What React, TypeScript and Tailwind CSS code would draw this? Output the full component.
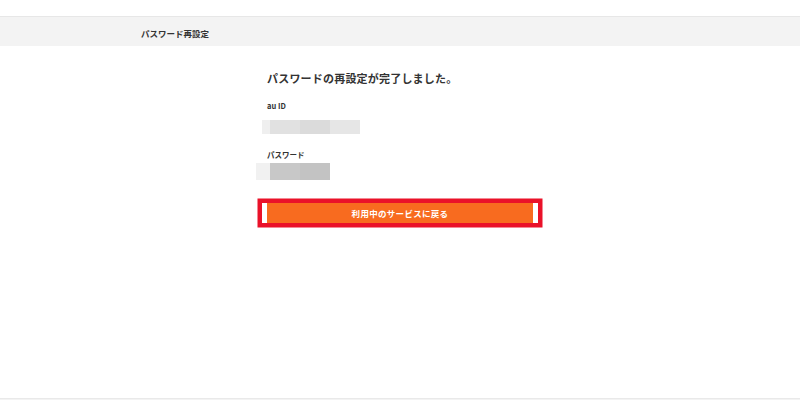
import React from 'react';

const font = { fontFamily: '"Noto Sans CJK JP", "Noto Sans", sans-serif' };

function Masked({ blocks, className }: { blocks: [string, string][]; className?: string }) {
  return (
    <div className={`flex ${className ?? ''}`}>
      {blocks.map(([w, bg], i) => (
        <div key={i} className={`${w} ${bg} h-full`} />
      ))}
    </div>
  );
}

export default function App() {
  return (
    <div className="h-[400px] flex flex-col bg-white text-[#333]" style={font}>
      <div className="h-4" />
      <header className="h-[30px] border-t border-[#e7e7e7] bg-[#f3f3f3] flex items-center pt-[2px]">
        <div className="w-[518px] mx-auto text-[8.5px] font-bold leading-[12px]">パスワード再設定</div>
      </header>

      <main className="w-[276px] mx-auto pt-[23.5px]">
        <h1 className="px-[5px] text-[11px] font-bold leading-[16px] tracking-[0.2px]">
          パスワードの再設定が完了しました。
        </h1>

        <p className="mt-[15px] px-[5px] text-[7.5px] font-bold leading-[10px]">au ID</p>
        <Masked
          className="mt-[9.5px] h-[14px]"
          blocks={[
            ['w-[8px]', 'bg-[#efefef]'],
            ['w-[30px]', 'bg-[#e1e1e1]'],
            ['w-[30px]', 'bg-[#dbdbdb]'],
            ['w-[30px]', 'bg-[#e6e6e6]'],
          ]}
        />

        <p className="mt-[15.5px] px-[5px] text-[7.5px] font-bold leading-[10px]">パスワード</p>
        <Masked
          className="mt-[3.5px] h-[17px] -ml-[6px]"
          blocks={[
            ['w-[14px]', 'bg-[#f1f1f1]'],
            ['w-[30px]', 'bg-[#c8c8c8]'],
            ['w-[30px]', 'bg-[#c3c3c3]'],
          ]}
        />

        <div className="mt-[23px] ring-[4.5px] ring-[#ea1129]">
          <button className="block w-full h-[20px] bg-[#f86b1f] border-x-[5px] border-white text-white text-[8.5px] font-bold leading-[20px] tracking-[0.3px]">
            利用中のサービスに戻る
          </button>
        </div>
      </main>

      <footer className="mt-auto h-[2px] border-t border-[#e9e9e9] bg-[#f3f3f3]" />
    </div>
  );
}
